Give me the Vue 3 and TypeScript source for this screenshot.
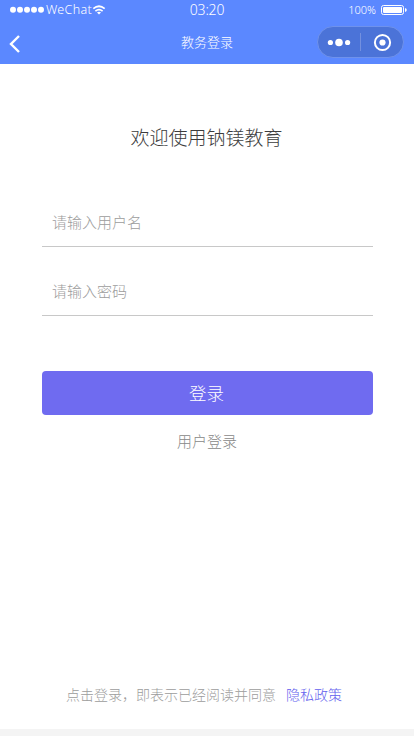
<script setup lang="ts">
import { ref } from 'vue'

const username = ref('')
const password = ref('')
const signalDots: number[] = [13, 20, 27, 34, 41]
</script>

<template>
  <div class="page">
    <header class="header">
      <div class="status">
        <div class="carrier">
          <svg class="signal" width="46" height="20" viewBox="0 0 46 20">
            <circle v-for="x in signalDots" :key="x" :cx="x" cy="9.8" r="3" fill="#fff" />
          </svg>
          <span class="carrier-name">WeChat</span>
          <svg class="wifi" width="14" height="20" viewBox="0 0 14 20" fill="none" stroke="#fff">
            <path d="M1.3 8.7Q7 3.8 12.7 8.7" stroke-width="1.7" />
            <path d="M3.4 11.1Q7 8 10.6 11.1" stroke-width="1.6" />
            <path d="M5 12.6Q7 11 9 12.6L7 14.6Z" fill="#fff" stroke="none" />
          </svg>
        </div>
        <time class="time">03:20</time>
        <div class="power">
          <span>100%</span>
          <svg width="27" height="12" viewBox="0 0 27 12">
            <rect x="1.5" y="1.5" width="22" height="9" rx="2" fill="none" stroke="#fff" />
            <rect x="3" y="3" width="19" height="6" rx="1" fill="#fff" />
            <path d="M25 4Q26.8 4.5 26.8 6T25 8Z" fill="#fff" />
          </svg>
        </div>
      </div>
      <nav class="nav">
        <button class="back" type="button" aria-label="返回">
          <svg width="12" height="20" viewBox="0 0 12 20" fill="none" stroke="#fff" stroke-width="2.4">
            <path d="M10 2L2 10L10 18" />
          </svg>
        </button>
        <h1 class="nav-title">教务登录</h1>
        <div class="capsule">
          <svg width="42" height="30" viewBox="0 0 42 30" fill="#fff">
            <circle cx="12.4" cy="15.5" r="2.6" />
            <circle cx="21" cy="15.5" r="3.8" />
            <circle cx="29.6" cy="15.5" r="2.6" />
          </svg>
          <i class="divider"></i>
          <svg width="42" height="30" viewBox="0 0 42 30">
            <circle cx="21.5" cy="15.5" r="7.6" fill="none" stroke="#fff" stroke-width="2" />
            <circle cx="21.5" cy="15.5" r="3.1" fill="#fff" />
          </svg>
        </div>
      </nav>
    </header>

    <main class="main">
      <h2 class="welcome">欢迎使用钠镁教育</h2>
      <form class="form" @submit.prevent>
        <input v-model="username" class="field" type="text" placeholder="请输入用户名" />
        <input v-model="password" class="field" type="password" placeholder="请输入密码" />
        <button class="submit" type="submit">登录</button>
      </form>
      <a class="user-login">用户登录</a>
      <p class="agreement"><span>点击登录，即表示已经阅读并同意</span><a class="privacy">隐私政策</a></p>
    </main>
  </div>
</template>

<style>
body {
  background: #f4f4f4;
}
</style>

<style scoped>
.page {
  box-sizing: border-box;
  height: 736px;
  padding-bottom: 7px;
  display: flex;
  flex-direction: column;
  overflow: hidden;
  background: #f4f4f4;
  font-family: "Noto Sans CJK SC", sans-serif;
  font-weight: 300;
}
h1, h2, p {
  margin: 0;
  font-weight: 300;
}
button {
  border: 0;
  padding: 0;
  font-family: inherit;
  font-weight: inherit;
}
svg {
  display: block;
  flex: none;
}
.header {
  height: 64px;
  flex: none;
  background: #5b88ff;
  color: #fff;
}
.status {
  height: 20px;
  display: grid;
  grid-template-columns: 1fr auto 1fr;
  align-items: center;
}
.carrier {
  display: flex;
  height: 20px;
}
.carrier-name {
  width: 46px;
  font-family: "Noto Sans", sans-serif;
  font-size: 12.5px;
  line-height: 19px;
  letter-spacing: 0.35px;
  white-space: nowrap;
}
.time {
  font-family: "Noto Sans", sans-serif;
  font-size: 14px;
  line-height: 20px;
  letter-spacing: -0.2px;
}
.power {
  display: flex;
  justify-content: flex-end;
  align-items: center;
  gap: 4px;
  padding-right: 7px;
  font-family: "Noto Sans", sans-serif;
  font-size: 11px;
  line-height: 20px;
}
.nav {
  height: 44px;
  display: grid;
  grid-template-columns: 1fr auto 1fr;
  align-items: center;
}
.back {
  margin: 4px 0 0 9px;
  width: 12px;
  height: 20px;
  background: none;
}
.nav-title {
  font-size: 13px;
  line-height: 20px;
}
.capsule {
  justify-self: end;
  box-sizing: border-box;
  width: 87px;
  height: 32px;
  margin: -1px 10px 0 0;
  border: 1px solid #6f92ec;
  border-radius: 16px;
  background: #4b73d8;
  display: flex;
  align-items: center;
}
.divider {
  width: 1px;
  height: 18px;
  background: #7390df;
}
.main {
  flex: 1;
  display: flex;
  flex-direction: column;
  padding: 58px 41px 24px 42px;
  background: #fff;
}
.welcome {
  padding-right: 2px;
  font-size: 19px;
  line-height: 30px;
  text-align: center;
  color: #3c3c3c;
}
.form {
  display: flex;
  flex-direction: column;
  margin-top: 46px;
}
.field {
  box-sizing: border-box;
  width: 100%;
  height: 49px;
  margin-bottom: 20px;
  padding: 0 11px 2px 10px;
  border: 0;
  border-bottom: 1px solid #c8c8c8;
  outline: 0;
  background: none;
  color: #444;
  font: inherit;
  font-size: 15px;
}
.field::placeholder {
  color: #9c9c9c;
}
.submit {
  height: 44px;
  margin-top: 35px;
  padding: 0 2px 2px 0;
  border-radius: 4px;
  background: #6f6bf0;
  color: #fff;
  font-size: 17.5px;
}
.user-login {
  margin-top: 15px;
  padding-right: 1px;
  font-size: 15px;
  line-height: 22px;
  text-align: center;
  color: #888;
}
.agreement {
  display: flex;
  gap: 10px;
  margin-top: auto;
  padding-left: 24px;
  font-size: 14px;
  line-height: 22px;
  white-space: nowrap;
  color: #9c9c9c;
}
.privacy {
  color: #625eee;
}
</style>
